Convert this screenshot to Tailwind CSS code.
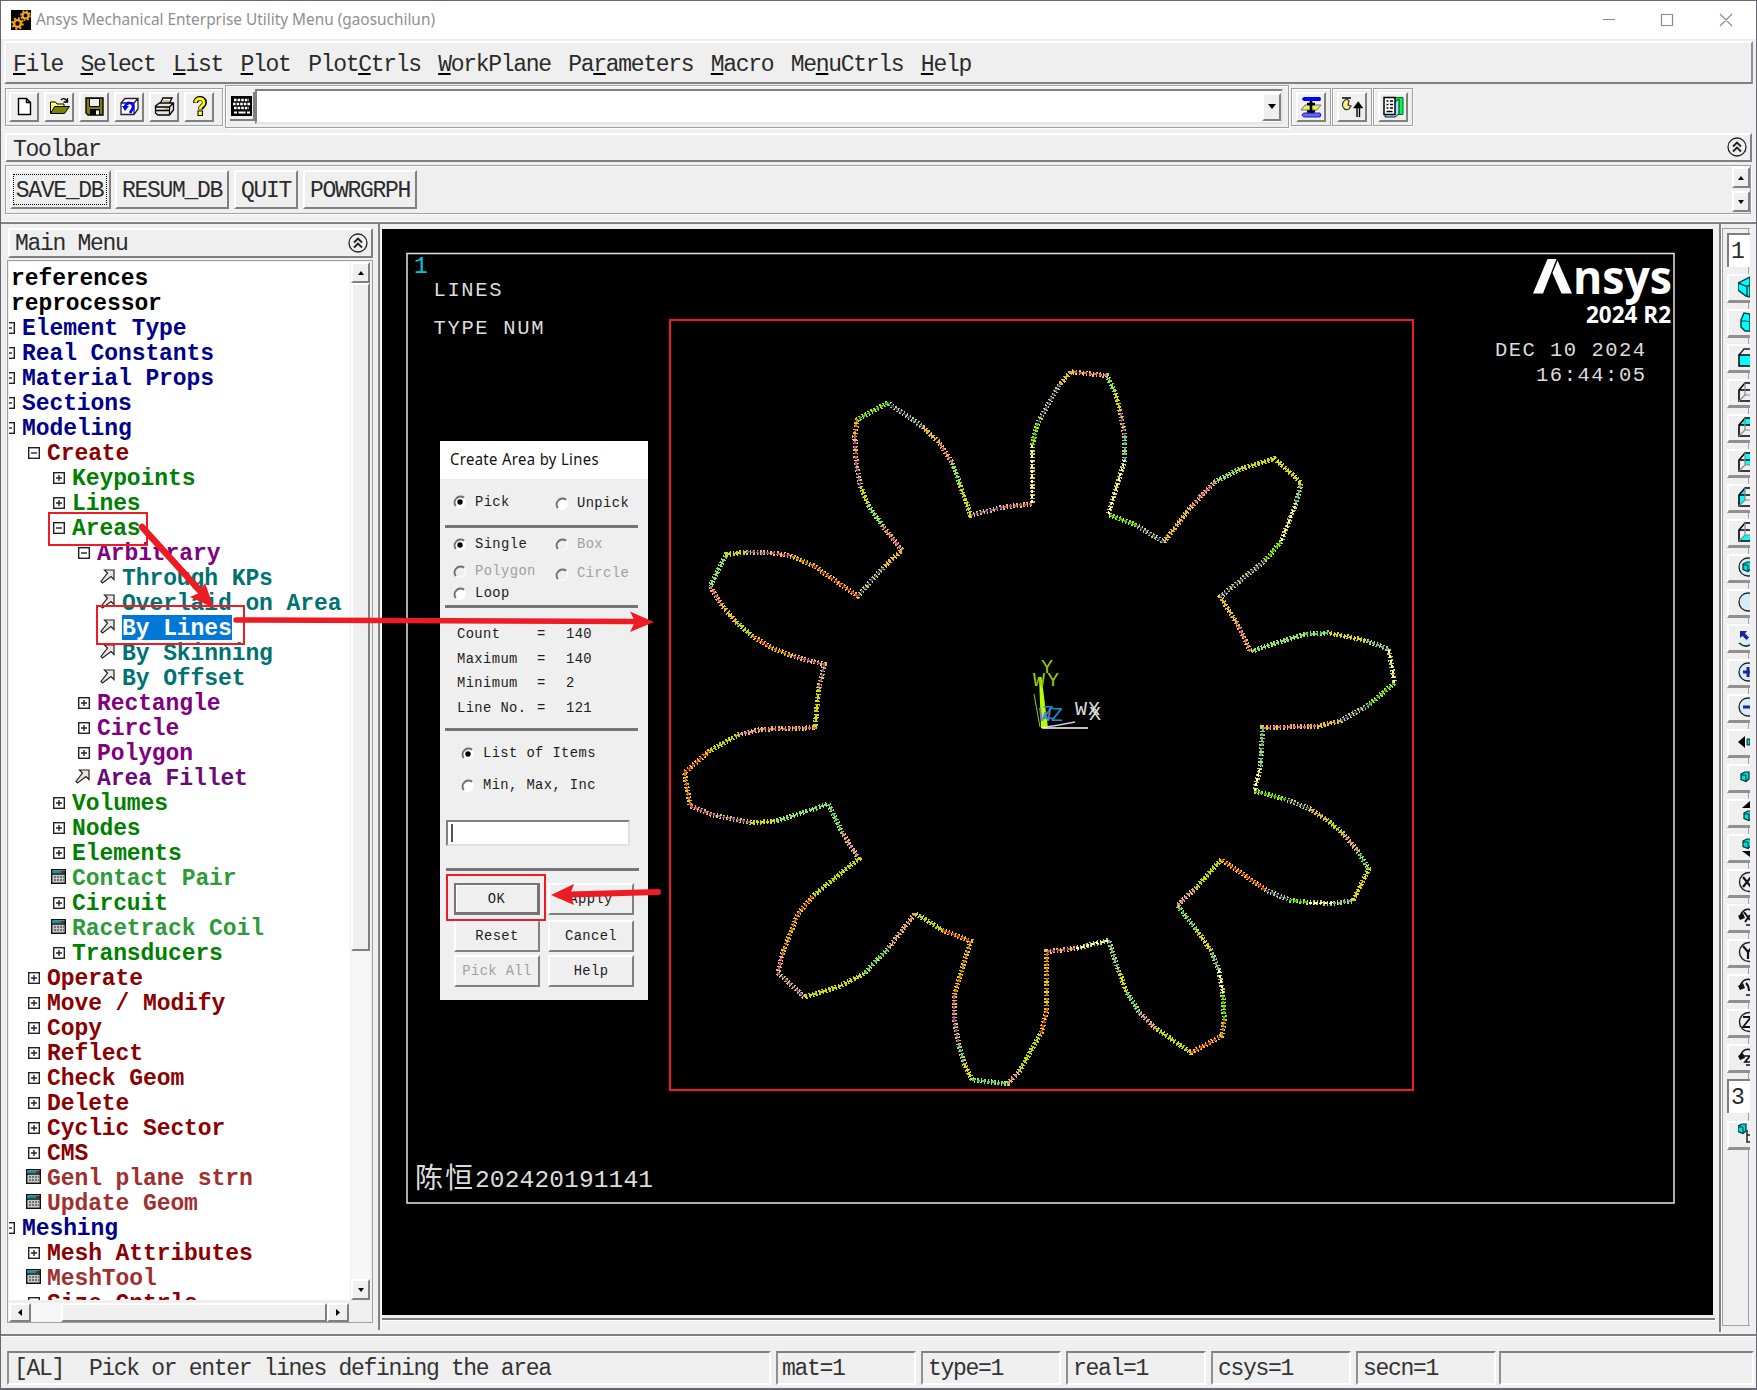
<!DOCTYPE html>
<html lang="en">
<head>
<meta charset="utf-8">
<title>Ansys Mechanical Enterprise Utility Menu</title>
<script src="https://cdn.jsdelivr.net/npm/@tailwindcss/browser@4"></script>
</head>
<body class="bg-[#6b6570]">
<div class="relative flex h-[1390px] w-[1757px] flex-col overflow-hidden px-px pt-px pb-[2px] font-['Liberation_Mono','Noto_Sans_CJK_SC',monospace] text-[23px] tracking-[-1.3px] text-[#2b2b2b]">
<div class="flex min-h-0 flex-1 flex-col bg-[#efefef]">

  <!-- title bar -->
  <div class="flex h-[38px] shrink-0 items-center bg-white pl-[10px]">
    <svg width="20" height="20" viewBox="0 0 20 20"><rect width="20" height="20" fill="#000"/><g fill="none" stroke="#f5a51b"><circle cx="14.5" cy="5.5" r="3" stroke-width="2.2"/><circle cx="14.5" cy="5.5" r="4.6" stroke-width="1.6" stroke-dasharray="1.8 1.8"/><circle cx="6.5" cy="13.5" r="3.4" stroke-width="2.4"/><circle cx="6.5" cy="13.5" r="5.4" stroke-width="1.8" stroke-dasharray="2.1 2.1"/></g></svg>
    <svg class="ml-[5px] overflow-visible" width="420" height="38"><text x="0" y="23.500" font-family="Noto Sans, sans-serif" font-size="16" letter-spacing="0" fill="#8f8f8f" textLength="399" lengthAdjust="spacingAndGlyphs">Ansys Mechanical Enterprise Utility Menu (gaosuchilun)</text></svg>
    <svg class="ml-auto mr-[21px]" width="134" height="16" viewBox="0 0 134 16" fill="none" stroke="#8a8a8a" stroke-width="1.2"><path d="M2 7.500h12M60.5 2.500h11v11h-11zM119 2l12 12M131 2l-12 12"/></svg>
  </div>

  <!-- menu bar -->
  <div class="ml-[3px] mr-[3px] mt-[2px] flex h-[43px] shrink-0 items-center gap-[17.5px] border-2 border-b-[#808080] border-l-white border-r-[#909090] border-t-white pl-[7px] pt-[5px]">
    <span><u class="decoration-black decoration-2 underline-offset-2">F</u>ile</span>
    <span><u class="decoration-black decoration-2 underline-offset-2">S</u>elect</span>
    <span><u class="decoration-black decoration-2 underline-offset-2">L</u>ist</span>
    <span><u class="decoration-black decoration-2 underline-offset-2">P</u>lot</span>
    <span>Plot<u class="decoration-black decoration-2 underline-offset-2">C</u>trls</span>
    <span><u class="decoration-black decoration-2 underline-offset-2">W</u>orkPlane</span>
    <span>Pa<u class="decoration-black decoration-2 underline-offset-2">r</u>ameters</span>
    <span><u class="decoration-black decoration-2 underline-offset-2">M</u>acro</span>
    <span>Me<u class="decoration-black decoration-2 underline-offset-2">n</u>uCtrls</span>
    <span><u class="decoration-black decoration-2 underline-offset-2">H</u>elp</span>
  </div>

  <!-- standard toolbar -->
  <div class="mt-px flex h-[43px] shrink-0 items-center pl-[4px]">
    <div class="flex h-[38px] w-[218px] items-center gap-[5px] border border-[#a0a0a0] pl-[3px] shadow-[inset_1px_1px_0_#fff,1px_1px_0_#fff]" id="std"></div>
    <div class="ml-[2px] flex h-[43px] w-[1064px] items-center border border-[#a0a0a0] pl-[4px] shadow-[inset_1px_1px_0_#fff,1px_1px_0_#fff]">
      <div class="flex h-[29px] w-[25px] items-center justify-center border-b-2 border-r-2 border-[#808080]">
        <svg width="21" height="20" viewBox="0 0 21 20"><rect width="21" height="20" fill="#000"/><path d="M3 4h15M2 8h17M3 12h15" stroke="#fff" stroke-width="2.600" stroke-dasharray="2.600 1"/><path d="M3 16.500h3M7.500 16.500h7M16 16.500h3" stroke="#fff" stroke-width="2"/></svg>
      </div>
      <div class="flex h-[35px] w-[1028px] items-center justify-end border-2 border-b-[#e4e4e4] border-l-[#808080] border-r-[#e4e4e4] border-t-[#808080] bg-white">
        <div class="flex h-[28px] w-[19px] items-center justify-center border-2 border-b-[#808080] border-l-white border-r-[#808080] border-t-white bg-[#efefef]">
          <svg width="8" height="5"><path d="M0 0h8l-4 5z"/></svg>
        </div>
      </div>
    </div>
    <div class="ml-[2px] flex gap-px" id="ext"></div>
  </div>

  <!-- toolbar header -->
  <div class="ml-[4px] mr-[4px] mt-[5px] flex h-[29px] shrink-0 items-center justify-between border-2 border-b-[#808080] border-l-white border-r-[#808080] border-t-white pl-[6px] pr-[3px]">
    <span class="pt-[5px]">Toolbar</span>
    <svg class="-mt-[2px]" width="20" height="20" viewBox="0 0 20 20" fill="none" stroke="#222" stroke-width="1.300"><circle cx="10" cy="10" r="9"/><path d="M6 9.500l4-4 4 4M6 14.500l4-4 4 4" stroke-width="1.900"/></svg>
  </div>

  <!-- abbreviation buttons -->
  <div class="ml-[4px] mr-[5px] mt-[3px] flex h-[49px] shrink-0 items-center border border-[#a0a0a0] pl-[4px] shadow-[inset_1px_1px_0_#fff,1px_1px_0_#fff]">
    <div class="flex h-[39px] w-[101px] items-center justify-center border-2 border-b-[#808080] border-l-white border-r-[#808080] border-t-white pr-[2px]"><span class="flex h-[31px] w-[94px] items-center justify-center border border-dotted border-black pt-[3px]">SAVE_DB</span></div>
    <div class="ml-[4px] flex h-[39px] w-[114px] items-center justify-center border-2 border-b-[#808080] border-l-white border-r-[#808080] border-t-white pt-[3px]">RESUM_DB</div>
    <div class="ml-[5px] flex h-[39px] w-[64px] items-center justify-center border-2 border-b-[#808080] border-l-white border-r-[#808080] border-t-white pt-[3px]">QUIT</div>
    <div class="ml-[5px] flex h-[39px] w-[114px] items-center justify-center border-2 border-b-[#808080] border-l-white border-r-[#808080] border-t-white pt-[3px]">POWRGRPH</div>
    <div class="ml-auto flex flex-col gap-[3px]">
      <div class="flex h-[21px] w-[18px] items-center justify-center border-2 border-b-[#808080] border-l-white border-r-[#808080] border-t-white"><svg width="6" height="4"><path d="M0 4h6l-3-4z"/></svg></div>
      <div class="flex h-[21px] w-[18px] items-center justify-center border-2 border-b-[#808080] border-l-white border-r-[#808080] border-t-white"><svg width="6" height="4"><path d="M0 0h6l-3 4z"/></svg></div>
    </div>
  </div>

  <div class="mt-[7px] h-[3px] shrink-0 border-t border-t-white bg-[#808080]"></div>

  <div class="flex h-[1110px] shrink-0">
    <!-- main menu pane -->
    <div class="flex w-[377px] flex-col pl-[6px] pt-[4px]">
      <div class="ml-px flex h-[30px] w-[365px] items-center justify-between border-2 border-b-[#808080] border-l-white border-r-[#808080] border-t-white pl-[5px] pr-[3px]">
        <span class="pt-[3px]">Main Menu</span>
        <svg class="-mt-px" width="20" height="20" viewBox="0 0 20 20" fill="none" stroke="#222" stroke-width="1.300"><circle cx="10" cy="10" r="9"/><path d="M6 9.500l4-4 4 4M6 14.500l4-4 4 4" stroke-width="1.900"/></svg>
      </div>
      <div class="mt-[2px] flex h-[1063px] w-[366px] flex-col border border-[#a0a0a0] pl-px pt-px">
        <div class="flex h-[1038px]">
          <div class="h-full w-[341px] overflow-hidden bg-white pt-[3px] font-bold tracking-[-0.090px]" id="tree"></div>
          <div class="ml-px flex w-[19px] flex-col">
            <div class="flex h-[21px] shrink-0 items-center justify-center border-2 border-b-[#808080] border-l-white border-r-[#808080] border-t-white"><svg width="6" height="4"><path d="M0 4h6l-3-4z"/></svg></div>
            <div class="h-[668px] shrink-0 border-2 border-b-[#808080] border-l-white border-r-[#808080] border-t-white"></div>
            <div class="flex-1 bg-[#f7f7f7]"></div>
            <div class="flex h-[21px] shrink-0 items-center justify-center border-2 border-b-[#808080] border-l-white border-r-[#808080] border-t-white"><svg width="6" height="4"><path d="M0 0h6l-3 4z"/></svg></div>
          </div>
        </div>
        <div class="mt-[3px] flex h-[19px] w-[340px]">
          <div class="flex w-[22px] items-center justify-center border-2 border-b-[#808080] border-l-white border-r-[#808080] border-t-white"><svg width="4" height="7"><path d="M4 0v7l-4-3.500z"/></svg></div>
          <div class="w-[30px] bg-[#f7f7f7]"></div>
          <div class="w-[266px] border-2 border-b-[#808080] border-l-white border-r-[#808080] border-t-white"></div>
          <div class="flex w-[22px] items-center justify-center border-2 border-b-[#808080] border-l-white border-r-[#808080] border-t-white"><svg width="4" height="7"><path d="M0 0v7l4-3.500z"/></svg></div>
        </div>
      </div>
    </div>
    <div class="h-[1106px] w-[4px] border-l-2 border-r border-l-[#808080] border-r-white"></div>

    <!-- graphics window -->
    <div class="flex w-[1333px] flex-col pt-[5px]">
      <svg id="plot" class="block shrink-0 bg-black" width="1331" height="1086" viewBox="382 229 1331 1086" font-family="Liberation Mono, Noto Sans CJK SC, monospace" letter-spacing="0">
        <rect x="407" y="253.500" width="1267" height="949.500" fill="none" stroke="#e6e6e6" stroke-width="1.500"/>
        <g fill="#dcdcdc" font-size="20.500">
          <text x="414" y="273" fill="#00c8dc" font-size="23">1</text>
          <text x="433.500" y="296" textLength="68">LINES</text>
          <text x="433.500" y="334" textLength="110">TYPE NUM</text>
          <text x="1495" y="356" textLength="150">DEC 10 2024</text>
          <text x="1536" y="381" textLength="109">16:44:05</text>
          <text x="415" y="1188" font-size="28" textLength="58">陈恒</text>
          <text x="475" y="1187" font-size="24.500" textLength="178">202420191141</text>
        </g>
        <g fill="#fff" font-family="Open Sans, sans-serif" font-weight="700">
          <path d="M1533 293.500L1547.500 259h9L1543 293.500zM1557.500 260.500L1572 293.500h-10.500L1552.500 273z"/>
          <text x="1573" y="293.500" font-size="46" textLength="99" lengthAdjust="spacingAndGlyphs">nsys</text>
          <text x="1586" y="323" font-size="23.500" textLength="85" lengthAdjust="spacingAndGlyphs">2024 R2</text>
        </g>
        <g id="gear" fill="none" shape-rendering="crispEdges"></g>
        <path d="M1039 677h2.500l6.500 51h-7z" fill="#b4ff00"/>
        <path d="M1034 694l6 33" stroke="#9acd00" fill="none"/>
        <path d="M1042 728h46" stroke="#fff" stroke-width="1.600"/><path d="M1046 727l13-2 16-3" stroke="#ccc" stroke-width="1.400" fill="none"/>
        <g font-size="20">
          <text x="1041" y="673" fill="#9acd00">Y</text><text x="1033" y="686" fill="#9acd00" textLength="26">WY</text>
          <text x="1039" y="721" fill="#8a78c8">W</text><text x="1042" y="719" fill="#1a8fd0">Z</text><text x="1051" y="721" fill="#1a8fd0">Z</text>
          <text x="1075" y="715" fill="#ddd" textLength="25">WX</text><text x="1089" y="720" fill="#ddd">X</text>
        </g>
      </svg>
      <div class="mt-[3px] h-[3px] border-t-2 border-b border-b-white border-t-[#808080]"></div>
    </div>
    <div class="ml-[4px] h-[1108px] w-[3px] border-l-2 border-r border-l-[#808080] border-r-white"></div>

    <!-- view tools, cut off by the window edge -->
    <div class="relative mt-[4px] flex h-[1098px] w-[28px] flex-col overflow-hidden border-b border-l border-t border-[#a0a0a0] pl-[4px] pt-[4px]" id="views">
      <div class="absolute bottom-0 right-[1px] top-0 w-px bg-[#a0a0a0]"></div>
    </div>
  </div>

  <div class="h-[3px] shrink-0 border-b border-b-white bg-[#808080]"></div>

  <!-- status bar -->
  <div class="mt-[14px] flex h-[34px] shrink-0 pl-[6px] text-[#333]">
    <div class="mr-[5px] flex w-[764px] items-center whitespace-pre border-2 border-b-white border-l-[#909090] border-r-white border-t-[#808080] pl-[5px] pt-[3px] tracking-[-1.320px]">[AL]  Pick or enter lines defining the area</div>
    <div class="mr-[5px] flex w-[140px] items-center border-2 border-b-white border-l-[#909090] border-r-white border-t-[#808080] pl-[4px] pt-[3px]">mat=1</div>
    <div class="mr-[5px] flex w-[140px] items-center border-2 border-b-white border-l-[#909090] border-r-white border-t-[#808080] pl-[5px] pt-[3px]">type=1</div>
    <div class="mr-[5px] flex w-[140px] items-center border-2 border-b-white border-l-[#909090] border-r-white border-t-[#808080] pl-[5px] pt-[3px]">real=1</div>
    <div class="mr-[5px] flex w-[140px] items-center border-2 border-b-white border-l-[#909090] border-r-white border-t-[#808080] pl-[5px] pt-[3px]">csys=1</div>
    <div class="mr-[3px] flex w-[140px] items-center border-2 border-b-white border-l-[#909090] border-r-white border-t-[#808080] pl-[5px] pt-[3px]">secn=1</div>
    <div class="w-[255px] border-2 border-b-white border-l-[#909090] border-r-white border-t-[#808080]"></div>
  </div>
</div>

<!-- picker dialog -->
<div class="absolute left-[440px] top-[441px] flex h-[559px] w-[208px] flex-col bg-[#efefef] text-[13.800px] tracking-[0.400px] text-[#1c1c1c]">
  <div class="h-[38px] bg-white"><svg width="208" height="38"><text x="10" y="23.500" font-family="Noto Sans, sans-serif" font-size="16" fill="#111" textLength="149" lengthAdjust="spacingAndGlyphs">Create Area by Lines</text></svg></div>
  <div class="ml-[5px] grid h-[49px] w-[193px] grid-cols-[102px_91px] border-b-[3px] border-[#757575]">
    <div class="flex items-center"><i data-on="1"></i><span class="pt-[3px]">Pick</span></div><div class="flex items-center pt-[4px]"><i></i><span class="pt-px">Unpick</span></div>
  </div>
  <div class="ml-[5px] grid h-[80px] w-[193px] grid-cols-[102px_91px] grid-rows-[34px_20px_24px] border-b-[3px] border-[#757575]">
    <div class="flex items-center"><i data-on="1"></i>Single</div><div class="flex items-center text-[#a0a0a0]"><i data-off="1"></i>Box</div>
    <div class="flex items-center text-[#a0a0a0]"><i data-off="1"></i>Polygon</div><div class="flex items-center pt-[5px] text-[#a0a0a0]"><i data-off="1"></i>Circle</div>
    <div class="flex items-center"><i></i><span class="pt-px">Loop</span></div>
  </div>
  <div class="ml-[5px] grid h-[123px] w-[193px] grid-cols-[80px_29px_70px] content-start border-b-[3px] border-[#757575] pl-[12px] pt-[15px] leading-[24.500px]">
    <span>Count</span><span>=</span><span>140</span>
    <span>Maximum</span><span>=</span><span>140</span>
    <span>Minimum</span><span>=</span><span>2</span>
    <span>Line No.</span><span>=</span><span>121</span>
  </div>
  <div class="flex h-[140px] flex-col pl-[6px]">
    <div class="mt-[13px] flex h-[20px] items-center pl-[7px]"><i data-on="1"></i>List of Items</div>
    <div class="mt-[12px] flex h-[20px] items-center pl-[7px]"><i></i><span class="pt-px">Min, Max, Inc</span></div>
    <div class="mt-[24px] h-[26px] w-[184px] border-2 border-b-[#e0e0e0] border-l-[#808080] border-r-[#e0e0e0] border-t-[#808080] bg-white p-[2px]"><div class="ml-px h-[18px] w-[2px] bg-[#555]"></div></div>
    <div class="mt-auto h-[3px] w-[193px] bg-[#757575]"></div>
  </div>
  <div class="ml-[14px] mt-[12px] grid grid-cols-[86px_86px] gap-x-[8px] gap-y-[5px]">
    <div class="flex h-[32px] items-center justify-center border-2 border-b-[3px] border-r-[3px] border-[#757575] pt-[3px] shadow-[inset_1px_1px_0_#fff]">OK</div>
    <div class="flex h-[32px] items-center justify-center border-2 border-b-[#808080] border-l-white border-r-[#808080] border-t-white pt-[3px]">Apply</div>
    <div class="flex h-[32px] items-center justify-center border-2 border-b-[#808080] border-l-white border-r-[#808080] border-t-white pt-[3px]">Reset</div>
    <div class="flex h-[32px] items-center justify-center border-2 border-b-[#808080] border-l-white border-r-[#808080] border-t-white pt-[3px]">Cancel</div>
    <div class="-mt-[2px] flex h-[32px] items-center justify-center border-2 border-b-[#808080] border-l-white border-r-[#808080] border-t-white pt-[3px] text-[#a0a0a0]">Pick All</div>
    <div class="-mt-[2px] flex h-[32px] items-center justify-center border-2 border-b-[#808080] border-l-white border-r-[#808080] border-t-white pt-[3px]">Help</div>
  </div>
</div>

<!-- red annotations -->
<svg class="pointer-events-none absolute left-0 top-0" width="1757" height="1390" fill="none" stroke="#ed1c24" stroke-width="2">
  <rect x="49" y="513" width="98" height="32"/><rect x="97" y="606" width="147" height="38"/>
  <rect x="447" y="875" width="98" height="45"/><rect x="670" y="320" width="743" height="770"/>
  <g stroke-linecap="round"><path d="M142 527l60 66" stroke-width="6.500"/><path d="M236 620l398 1.500" stroke-width="5.500"/><path d="M658 892l-88 2.500" stroke-width="6"/></g>
  <g fill="#ed1c24" stroke="none"><path d="M214 608l-24-11 9-4 6-10z"/><path d="M654 622l-24-10.500 5 10-5 10.500z"/><path d="M551 895l23-11-4 10.500 4 10.500z"/></g>
</svg>
</div>

<script>
const ROW = "flex h-[25px] items-center whitespace-pre";
const colors = {k:"text-black", n:"text-[#00008b]", r:"text-[#8b0000]", g:"text-[#008000]", p:"text-[#800080]", t:"text-[#007272]", G:"text-[#2e9a3a]", R:"text-[#a03030]", P:"text-[#6a0a78]"};
const indent = ["ml-[2px]", "ml-[13px]", "ml-[38px]", "ml-[63px]", "ml-[88px]", "ml-[113px]"];
const box = p => `<svg class="-ml-[19px] mr-[7px] shrink-0" width="12" height="12" fill="none" stroke="#222" stroke-width="1.400"><rect x=".7" y=".7" width="10.600" height="10.600"/><path d="M3 6h6${p ? "M6 3v6" : ""}"/></svg>`;
const arrow = `<svg class="-ml-[22px] -mt-[3px] mr-[7px] shrink-0" width="15" height="15" fill="#efe4e4" stroke="#222" stroke-width="1.200"><path d="M4.500 1h9.500v9.500l-3-3-8.500 6.500-1.500-1.500 6.500-8.500z"/></svg>`;
const panel = `<svg class="-ml-[21px] -mt-[2px] mr-[6px] shrink-0" width="15" height="15"><rect x=".7" y=".7" width="13.600" height="13.600" fill="#c8c8c8" stroke="#111" stroke-width="1.400"/><path d="M1 3h9" stroke="#009a9a" stroke-width="2"/><path d="M10 3h4M1 5h13" stroke="#111" stroke-width="1.300"/><path d="M3 8h10M3 11h10" stroke="#555" stroke-width="1.500" stroke-dasharray="2 1"/></svg>`;
const tree = [
 [0,"k","","references"],[0,"k","","reprocessor"],[1,"n","-","Element Type"],[1,"n","-","Real Constants"],[1,"n","-","Material Props"],[1,"n","-","Sections"],[1,"n","-","Modeling"],
 [2,"r","-","Create"],[3,"g","+","Keypoints"],[3,"g","+","Lines"],[3,"g","-","Areas"],[4,"p","-","Arbitrary"],[5,"t","a","Through KPs"],[5,"t","a","Overlaid on Area"],[5,"s","a","By Lines"],[5,"t","a","By Skinning"],[5,"t","a","By Offset"],
 [4,"p","+","Rectangle"],[4,"p","+","Circle"],[4,"p","+","Polygon"],[4,"P","a","Area Fillet"],[3,"g","+","Volumes"],[3,"g","+","Nodes"],[3,"g","+","Elements"],[3,"G","w","Contact Pair"],[3,"g","+","Circuit"],[3,"G","w","Racetrack Coil"],[3,"g","+","Transducers"],
 [2,"r","+","Operate"],[2,"r","+","Move / Modify"],[2,"r","+","Copy"],[2,"r","+","Reflect"],[2,"r","+","Check Geom"],[2,"r","+","Delete"],[2,"r","+","Cyclic Sector"],[2,"r","+","CMS"],[2,"R","w","Genl plane strn"],[2,"R","w","Update Geom"],
 [1,"n","-","Meshing"],[2,"r","+","Mesh Attributes"],[2,"R","w","MeshTool"],[2,"r","+","Size Cntrls"]];
document.getElementById("tree").innerHTML = tree.map(([l, c, k, t]) => {
  const icon = k === "-" ? box(0) : k === "+" ? box(1) : k === "a" ? arrow : k === "w" ? panel : "";
  const cls = c === "s" ? "bg-[#0078d7] text-white" : colors[c];
  return `<div class="${ROW}"><div class="flex items-center ${indent[l]}">${icon}<span class="block h-[25px] leading-[28px] ${cls}">${t}</span></div></div>`;
}).join("");

// radio buttons
document.querySelectorAll("i").forEach(e => {
  e.className = "mr-[8px] flex shrink-0 pl-[8px]";
  const fill = e.dataset.off ? "#efefef" : "#fff";
  e.innerHTML = `<svg width="14" height="14"><circle cx="7" cy="7" r="6" fill="${fill}"/><path d="M2.800 11.200A6 6 0 0 1 11.200 2.800" fill="none" stroke="#707070" stroke-width="2"/><path d="M11.200 2.800A6 6 0 0 1 2.800 11.200" fill="none" stroke="#fff" stroke-width="1.200"/>${e.dataset.on ? '<circle cx="7" cy="7" r="2.700" fill="#000"/>' : ""}</svg>`;
});

// toolbar icons
const BTN = "flex h-[30px] w-[30px] items-center justify-center border-2 border-b-[#808080] border-l-white border-r-[#808080] border-t-white";
const std = [
 `<path d="M4.500 2.500h8l4 4v12h-12zM12.500 2.500v4h4" fill="#fff" stroke="#000" stroke-width="1.400"/>`,
 `<path d="M1.500 17V6h5l1.500 2h7v3" fill="#ff6" stroke="#000"/><path d="M1.500 17.500l4-7h15l-5 7z" fill="#808000" stroke="#000"/><path d="M12 4q3-3 6 1M18.500 2v4h-4" fill="none" stroke="#000" stroke-width="1.300"/>`,
 `<path d="M2 2h17v17H4l-2-2z" fill="#808000" stroke="#000" stroke-width="1.400"/><path d="M5.500 2.500h10v8h-10z" fill="#efefef" stroke="#000"/><path d="M6 13h10v6H6z" fill="#000"/><path d="M12 14.500h3v4h-3z" fill="#efefef"/>`,
 `<path d="M2 7l4-4.500h13V13l-4 5.500H2zM2 7h13v11M15 7l4-4.500" fill="#fff" stroke="#223" stroke-width="1.300"/><path d="M6 10.500c2-5 9-5 8 1.500l-3 5" fill="none" stroke="#00f" stroke-width="2.600"/><path d="M3 10h7l-4 5z" fill="#00f"/>`,
 `<path d="M6 8l3-6h9l-3 6z" fill="#fff" stroke="#000" stroke-width="1.300"/><path d="M1.500 10l4-3h14v7l-4 5H4l-2.500-2zM1.500 11h14v7M15.500 11l4-4M2 14.500h13" fill="#e4e4e4" stroke="#000" stroke-width="1.300"/><path d="M9 5h6M11 13h3" stroke="#880"/>`,
 `<path d="M6.500 7c0-6 9-6 9-.5 0 3.500-4 3.500-4 7" fill="none" stroke="#000" stroke-width="5"/><path d="M6.500 6.500c0-5 8.500-5 8.500 0 0 3.500-4 3.500-4 6.500" fill="none" stroke="#ff0" stroke-width="2.800"/><rect x="9" y="15" width="4.500" height="4.500" fill="#ff0" stroke="#000"/>`];
document.getElementById("std").innerHTML = std.map(s => `<div class="${BTN}"><svg width="21" height="21">${s}</svg></div>`).join("");
const ext = [
 `<path d="M4 1h16q2 2 0 4H4q-4-2 0-4z" fill="#00f"/><path d="M5 9h16l-4 5H1z" fill="#ee6" stroke="#555" stroke-width=".8"/><path d="M4 17h16q2 2 0 4H4q-4-2 0-4z" fill="#66f" stroke="#00a" stroke-width=".8"/><path d="M11 5v12M7 8h8M7 15.500h8" stroke="#000" stroke-width="2.600"/>`,
 `<path d="M1 2h9" stroke="#000" stroke-width="1.500"/><path d="M6 3q-6 3-4 8 2 4 6 2l2-3-3-1 1-4z" fill="#fe8" stroke="#333" stroke-width="1.200"/><path d="M16 21V9M18.500 21V9M13.500 11.500l3.700-5 3.700 5z" fill="#000" stroke="#000" stroke-width="1.400"/>`,
 `<path d="M13 1.500h8v17h-8z" fill="#0f3" stroke="#063"/><path d="M13 6l4-3v15l-4 3H3v-2" fill="#9df" stroke="#122"/><path d="M2 1.500h11v17H2z" fill="#fff" stroke="#000" stroke-width="1.500"/><path d="M4.500 5h2M8 5h3M4.500 8.500h2M8 8.500h3M4.500 12h2M8 12h3M4.500 15.500h6" stroke="#000" stroke-width="1.500"/>`];
document.getElementById("ext").innerHTML = ext.map(s => `<div class="flex h-[38px] w-[40px] items-center justify-center border border-[#a0a0a0] pr-px shadow-[inset_1px_1px_0_#fff,1px_1px_0_#fff]"><div class="${BTN}"><svg width="22" height="22">${s}</svg></div></div>`).join("");

// view icons
const cage = f => `${f}<path d="M12 2H7L1 9v11h11M1 9h11" fill="none" stroke="#000" stroke-width="1.600"/><path d="M7 2v12h5M7 14l-6 6" fill="none" stroke="#888" stroke-width="1.200"/>`;
const lens = s => `<circle cx="10" cy="11" r="9" fill="#d5ecfb" stroke="#222" stroke-width="1.300"/>${s}`;
const cube = (x, y) => `<path d="M${x} ${y + 2}l4-2h4v7l-3 2.500-5-2z" fill="#0dd" stroke="#033" stroke-width="1.200"/><path d="M${x} ${y + 3}h5v6" fill="none" stroke="#033"/>`;
const turn = s => `<path d="M2 10q4-9 11-6M12 19h-4" fill="none" stroke="#111" stroke-width="1.500"/><path d="M0 10l5-3 2 5-5 2z" fill="#111"/>${s}`;
const ring = s => `<circle cx="11" cy="11" r="9.500" fill="none" stroke="#222" stroke-width="1.400"/>${s}`;
const views = [
 `<path d="M0 7l12-6v20L8 20 0 14z" fill="#0ff" stroke="#044" stroke-width="1.500"/><path d="M0 7l9 3.500v10M9 10.500l4-2" fill="none" stroke="#044" stroke-width="1.400"/>`,
 `<path d="M3 9l3-7 6 1v17H7l-4-4z" fill="#0ff" stroke="#044" stroke-width="1.500"/><path d="M3 10h5l4 1" fill="none" stroke="#044"/>`,
 `<path d="M1 9l5-6h6" fill="none" stroke="#222" stroke-width="1.400"/><path d="M1 9h12v11H1z" fill="#0ff" stroke="#000" stroke-width="1.500"/>`,
 cage(""), cage(`<path d="M1 9l6-7h5v7z" fill="#0ff"/>`), cage(`<path d="M7 2h5v12H7z" fill="#0ff"/>`), cage(`<path d="M1 9l6-7v12l-6 6z" fill="#0ff"/>`), cage(`<path d="M1 20l6-6h5v6z" fill="#0ff"/>`),
 lens(cube(5, 6)), lens(""), `<path d="M1 17q8 8 13 0V8H7z" fill="#d5ecfb"/><path d="M1 17q6 5 11 2" fill="none" stroke="#222" stroke-width="1.500"/><path d="M2 5h7L7 7.500l4 4-2.500 2.500-4-4L2 12z" fill="#229"/>`,
 lens(`<path d="M5 11h8M10 6v10" stroke="#229" stroke-width="3"/>`), lens(`<path d="M5 11h8" stroke="#229" stroke-width="3"/>`),
 `<path d="M0 11l7-6v12z"/><path d="M9 8h3v6H9z" fill="#0cc" stroke="#033"/>`, cube(3, 6), `<path d="M12 0v7H4z"/>` + cube(6, 10), cube(5, 3) + `<path d="M4 15h8v6z"/>`,
 ring(`<path d="M5 6l8 10M13 6l-8 10" stroke="#111" stroke-width="2.200"/>`), turn(`<path d="M6 6l6 8M12 9l-5 7" stroke="#111" stroke-width="2" fill="none"/>`),
 ring(`<path d="M5 5l5 6v7M10 11l4-5" stroke="#111" stroke-width="2.200" fill="none"/>`), turn(`<path d="M8 7q3 3 3 8" stroke="#111" stroke-width="2" fill="none"/>`),
 ring(`<path d="M5 6h8l-8 10h8" stroke="#111" stroke-width="1.800" fill="none"/>`), turn(`<path d="M6 10h6l-5 6h5" stroke="#111" stroke-width="1.700" fill="none"/>`)];
const vbtn = s => `<div class="relative mb-[6px] h-[29px] w-[23px] shrink-0 overflow-hidden border-b-[3px] border-l-2 border-t-2 border-b-[#909090] border-l-white border-t-white bg-[#efefef] pl-[9px]"><svg width="12" height="22" viewBox="0 0 12 22">${s}</svg></div>`;
const vnum = n => `<div class="relative flex h-[34px] w-[23px] shrink-0 items-center border-l-2 border-t-2 border-[#808080] bg-white pl-[2px]"><span class="pt-[3px]">${n}</span></div>`;
document.getElementById("views").insertAdjacentHTML("beforeend",
  vnum(1) + `<div class="h-[7px] shrink-0"></div>` + views.map(vbtn).join("") + vnum(3) + `<div class="h-[8px] shrink-0"></div>` + vbtn(cube(0, 1) + `<path d="M9 7v12h4M9 12h3" fill="none" stroke="#222" stroke-width="1.500"/>`));

// gear outline: upper half, the lower half is the same turned by 180 degrees about the axis
const half = [[1263.3,728.3],[1318.3,726.7],[1341.7,721],[1370,705],[1395,683.3],[1389.3,650],[1366.7,641],[1328.3,633.3],[1303.3,635],[1251,652],[1237.3,623.3],[1220.7,597.3],[1266.7,560],[1281.7,541.7],[1296.7,503.3],[1301.7,483.3],[1275,459],[1239.3,470],[1215,482.7],[1190.7,508.3],[1164.3,542.7],[1136.7,525.7],[1109,515],[1125.3,460],[1125.3,436.7],[1120.7,411.7],[1115,391.7],[1107.3,376],[1071.7,372.3],[1060,385],[1038.3,423.3],[1032.7,445],[1032.7,504.3],[1003.3,507.7],[971,515.7],[960,483.3],[952.7,463.3],[940,443.3],[923.3,427.3],[888.3,403.3],[857.7,420],[855.3,436.7],[856.7,463.3],[861,486.7],[868.3,505],[883.3,526.7],[902.3,550.7],[883.3,568.3],[858.3,596.7],[813.3,565.7],[790,556],[770,553.3],[746.7,552.7],[726.7,555],[710.7,586.7],[721.7,605],[736.7,622.7],[753.3,636.7],[770,647.3],[793.3,656.7],[825,665],[819,690],[815.7,727.7]].map(([x, y]) => [x - .5, y - .5]);
const pts = half.concat(half.slice(0, -1).map(([x, y]) => [2079 - x, 1455.500 - y]));
const pal = ["#ff40c0","#00d8c8","#c8e000","#30b0ff","#e020e0","#00e000","#ff2010","#ffa040","#f060ff","#40f0c0","#e8d800","#9030ff","#ffffff","#e06000","#2040ff","#a0e000"];
const d = "M" + pts.map(p => p.map(v => v.toFixed(1)).join(" ")).join("L") + "z";
let g = `<path d="${d}" stroke="#d8d800" stroke-width="5" stroke-dasharray="1.600 1.800"/>`;
pts.forEach((p, i) => {
  const q = pts[(i + 1) % pts.length], c = pal[(i * 7 + (i >> 3)) % pal.length];
  g += `<path d="M${p}L${q}" stroke="${c}" stroke-width="2" stroke-dasharray="3 2"/>`;
});
document.getElementById("gear").innerHTML = g;
</script>
</body>
</html>
